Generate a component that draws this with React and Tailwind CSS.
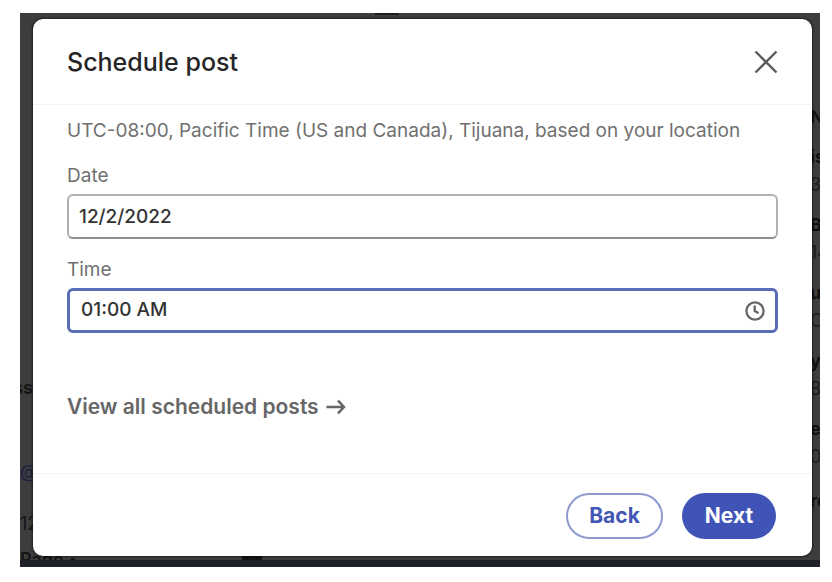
import React, { useState } from "react";

// bits of the feed that peek out from behind the dialog
const rightFeed = [
  { text: "N", bold: true, gap: "mt-[92px]" },
  { text: "is", bold: true, gap: "mt-4" },
  { text: "3", bold: false, gap: "mt-1" },
  { text: "B", bold: true, gap: "mt-4" },
  { text: "14", bold: false, gap: "mt-1" },
  { text: "u", bold: true, gap: "mt-4" },
  { text: "C", bold: false, gap: "mt-1" },
  { text: "y", bold: true, gap: "mt-4" },
  { text: "8", bold: false, gap: "mt-1" },
  { text: "e", bold: true, gap: "mt-4" },
  { text: "0", bold: false, gap: "mt-1" },
  { text: "re", bold: true, gap: "mt-5" },
];

function Feed() {
  return (
    <div
      aria-hidden="true"
      className="absolute inset-0 overflow-hidden text-[18px] leading-6 text-[#141414]"
    >
      <div className="flex justify-between">
        <div className="w-[13px] pt-[363px]">
          <p className="flex justify-end font-semibold">ss</p>
          <p className="mt-[60px] text-[#1b2040]">@</p>
          <p className="mt-7">12</p>
          <p className="mt-3 whitespace-nowrap font-semibold">Page •</p>
        </div>
        <div className="w-[10px] whitespace-nowrap">
          {rightFeed.map((row) => (
            <p
              key={row.text}
              className={`${row.gap} ${row.bold ? "font-bold text-[#101010]" : "text-[#1c1c1c]"}`}
            >
              {row.text}
            </p>
          ))}
        </div>
      </div>
      <div className="absolute bottom-0 left-[222px] h-1 w-5 bg-[#141414]" />
      <div className="absolute top-0 left-[355px] h-0.5 w-6 bg-[#1c1c1c]" />
    </div>
  );
}

function CloseIcon() {
  return (
    <svg viewBox="0 0 24 24" className="size-6" fill="none" stroke="#5c5c5c" strokeWidth="2.4">
      <path d="M1.5 1.5 22.5 22.5M22.5 1.5 1.5 22.5" />
    </svg>
  );
}

function ClockIcon() {
  return (
    <svg viewBox="0 0 20 20" className="size-5" fill="none" stroke="#666666" strokeWidth="2.3">
      <circle cx="10" cy="10" r="8.6" />
      <path d="M9.7 4.5V10L13.6 12" />
    </svg>
  );
}

function ArrowIcon() {
  return (
    <svg viewBox="0 0 20 18" className="h-[18px] w-5" fill="none" stroke="#666666" strokeWidth="2.5">
      <path d="M0.5 9H18M12 2.6 18 9 12 15.4" />
    </svg>
  );
}

function SchedulePost() {
  const [date, setDate] = useState("12/2/2022");
  const [time, setTime] = useState("01:00 AM");

  const handleSubmit = (e) => {
    e.preventDefault();
  };

  return (
    <form
      onSubmit={handleSubmit}
      role="dialog"
      aria-labelledby="title"
      className="relative rounded-[10px] bg-white shadow-[0_0_2px_1px_rgba(0,0,0,0.5)]"
    >
      <header className="flex items-center justify-between border-b border-[#f3f3f3] px-[34px] pt-[25px] pb-6">
        <h1 id="title" className="text-[25px] leading-9 font-medium text-[#262626]">
          Schedule post
        </h1>
        <button type="button" aria-label="Close">
          <CloseIcon />
        </button>
      </header>

      <div className="px-[34px] pt-3 pb-[52px]">
        <p className="text-[19px] leading-7 text-[#707070]">
          UTC-08:00, Pacific Time (US and Canada), Tijuana, based on your location
        </p>

        <label htmlFor="date" className="mt-[19px] block text-[19px] leading-6 text-[#707070]">
          Date
        </label>
        <input
          id="date"
          type="text"
          value={date}
          onChange={(e) => setDate(e.target.value)}
          className="mt-[6px] block h-[45px] w-full rounded-[6px] border-2 border-[#b0b0b0] border-b-[#8e8e8e] px-[10px] text-[19px] font-medium text-[#333333] outline-none"
        />

        <label htmlFor="time" className="mt-[19px] block text-[19px] leading-6 text-[#707070]">
          Time
        </label>
        <div className="mt-[6px] flex h-[45px] items-center rounded-[6px] border-3 border-[#5a6cb8] pr-[10px] pl-[11px]">
          <input
            id="time"
            type="text"
            value={time}
            onChange={(e) => setTime(e.target.value)}
            className="min-w-0 flex-1 text-[19px] font-medium text-[#333333] outline-none"
          />
          <ClockIcon />
        </div>

        <a
          href="#scheduled"
          className="mt-[60px] flex items-center gap-[7px] text-[21px] leading-7 font-semibold text-[#666666]"
        >
          View all scheduled posts
          <ArrowIcon />
        </a>
      </div>

      <footer className="flex justify-end gap-[19px] border-t border-[#f3f3f3] pt-[19px] pr-9 pb-[17px] text-[21px] font-bold">
        <button
          type="button"
          className="h-[46px] w-[97px] rounded-full border-2 border-[#8f9bd0] text-[#4356b4]"
        >
          Back
        </button>
        <button type="submit" className="h-[46px] w-[94px] rounded-full bg-[#4054b8] text-white">
          Next
        </button>
      </footer>
    </form>
  );
}

function App() {
  return (
    <main className="bg-white pt-[13px] pr-3 pb-[15px] pl-5 font-[Inter,'Liberation_Sans',sans-serif]">
      <div className="relative border-b-[7px] border-[#1d2127] bg-[#3d3d3d] pt-[6px] pr-2 pb-1 pl-[13px]">
        <Feed />
        <SchedulePost />
      </div>
    </main>
  );
}

export default App;
